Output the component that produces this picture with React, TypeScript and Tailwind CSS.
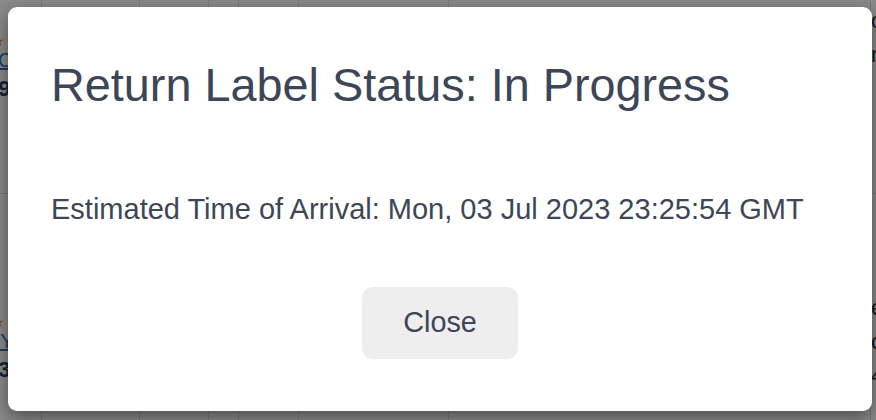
import React from "react";

const font = { fontFamily: '"Liberation Sans", Arial, Helvetica, sans-serif' };

function Cell({ w, children }: { w: string; children?: React.ReactNode }) {
  return <div className={`${w} h-full shrink-0 border-r border-[#e2e2e2] overflow-hidden`}>{children}</div>;
}

function LeftContent({ link, num, top }: { link: string; num: string; top: string }) {
  return (
    <div className={`${top} flex flex-col items-start`}>
      <span className="-ml-[8px] text-[14px] leading-[14px] text-[#e8a020]">★</span>
      <span className="-ml-[13px] text-[20px] leading-[24px] text-[#2f6fc0] underline">{link}</span>
      <span className="-ml-[20px] mt-[4px] text-[22px] leading-[26px] font-bold text-[#2a3d66]">{num}</span>
    </div>
  );
}

function RightContent({ a, b, c, top }: { a: string; b: string; c: string; top: string }) {
  return (
    <div className={`${top} flex flex-col text-[22px] text-[#333]`}>
      <span className="leading-[34px]">{a}</span>
      <span className="leading-[34px]">{b}</span>
      <span className="leading-[34px]">{c}</span>
    </div>
  );
}

function Row({ h, left, right }: { h: string; left: React.ReactNode; right: React.ReactNode }) {
  return (
    <div className={`flex ${h} border-b border-[#e2e2e2]`}>
      <Cell w="w-[42px]">{left}</Cell>
      <Cell w="w-[98px]" />
      <Cell w="w-[69px]" />
      <Cell w="w-[30px]" />
      <Cell w="w-[60px]" />
      <Cell w="w-[150px]" />
      <Cell w="w-[422px]" />
      <div className="w-[40px] h-full shrink-0 overflow-hidden">{right}</div>
    </div>
  );
}

export default function App() {
  return (
    <div className="relative w-[876px] h-[420px] overflow-hidden bg-white" style={font}>
      <div className="flex flex-col">
        <Row
          h="h-[194px]"
          left={<LeftContent link="3C" num="1.9" top="mt-[34px]" />}
          right={<RightContent a="o" b="" c="r" top="mt-[4px]" />}
        />
        <Row
          h="h-[240px]"
          left={<LeftContent link="XY" num="1.3" top="mt-[121px]" />}
          right={<RightContent a="e" b="c" c="4" top="mt-[97px]" />}
        />
      </div>

      <div className="absolute inset-0 bg-black/[0.46]" />

      <div className="absolute left-[8px] top-[7px] w-[864px] h-[404px] rounded-[9px] bg-white shadow-[0_6px_18px_rgba(0,0,0,0.45)] px-[43px] pt-[50px] flex flex-col text-[#3c4656]">
        <h1 className="text-[46.8px] leading-[56px] font-normal whitespace-nowrap">Return Label Status: In Progress</h1>
        <p className="mt-[74.5px] text-[29px] leading-[43px] whitespace-nowrap">
          Estimated Time of Arrival: Mon, 03 Jul 2023 23:25:54 GMT
        </p>
        <div className="mt-[56.5px] flex justify-center">
          <button className="w-[156px] h-[72px] rounded-[11px] bg-[#eeeeee] text-[28.8px] text-[#3c4656] flex items-center justify-center">
            Close
          </button>
        </div>
      </div>
    </div>
  );
}
